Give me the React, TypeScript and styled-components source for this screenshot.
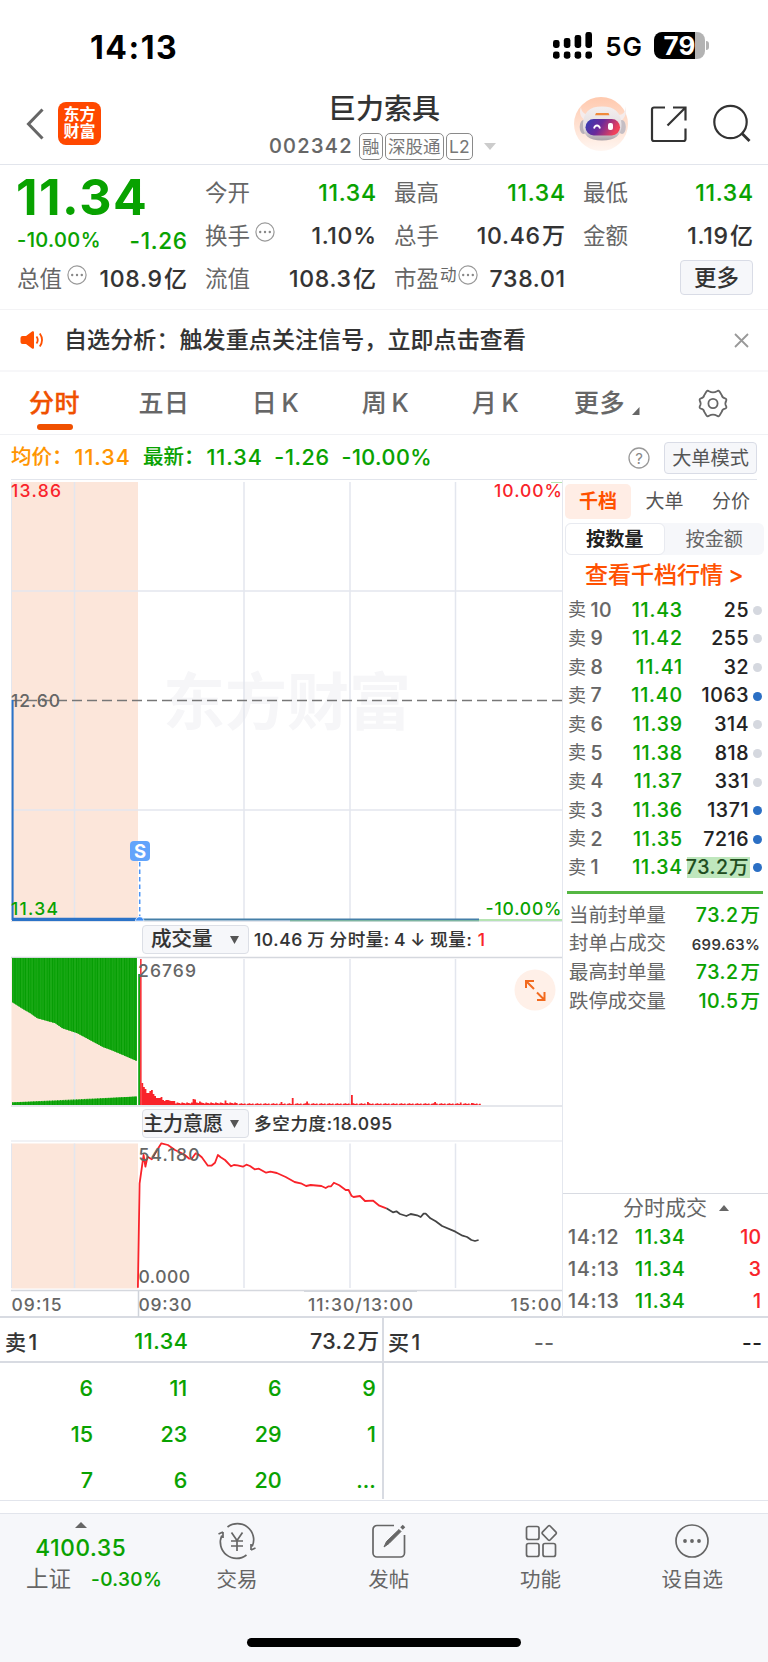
import React from 'react';
import styled, { createGlobalStyle } from 'styled-components';

const GREEN = '#08a200';
const RED = '#f9232a';
const ORANGE = '#ff5000';
const INK = '#333';
const GREY = '#666';
const LINE = '#e2e5ec';

const Global = createGlobalStyle`
  * { box-sizing: border-box; }
  body { margin: 0; background: #fff; font-family: Inter, "Noto Sans CJK SC", sans-serif; color: ${INK}; }
  svg { display: block; flex: none; overflow: visible; }
`;

const Screen = styled.div`
  width: 768px;
  height: 1662px;
  overflow: hidden;
  display: flex;
  flex-direction: column;
  background: #fff;
`;

const Text = styled.span<{ $s: number; $w?: number; $c?: string; $ls?: number; $ws?: number }>`
  font-size: ${p => p.$s}px;
  font-weight: ${p => p.$w ?? 500};
  -webkit-text-stroke: ${p => ((p.$w ?? 500) === 500 ? 0.12 : 0)}px;
  color: ${p => p.$c ?? INK};
  letter-spacing: ${p => p.$ls ?? 0}px;
  word-spacing: ${p => p.$ws ?? -3}px;
  margin-right: ${p => -(p.$ls ?? 0)}px;
  line-height: 1;
  white-space: pre;
`;

/* status bar */
const StatusBar = styled.div`
  height: 92px;
  padding: 32px 59px 0 90px;
  display: flex;
  justify-content: space-between;
  align-items: flex-start;
`;
const StatusRight = styled.div`
  display: flex;
  align-items: center;
  height: 27px;
`;
const Clock = styled.div`
  line-height: 25px;
`;
const NetLabel = styled.div`
  margin: 5px 12px 0 12px;
  line-height: 26px;
`;
const Battery = styled.div`
  width: 51px;
  height: 27px;
  border-radius: 8px;
  background: linear-gradient(90deg, #000 0 40.5px, #b3b3b3 40.5px);
  display: flex;
  align-items: center;
  justify-content: center;
`;
const BatteryNub = styled.div`
  width: 3px;
  height: 9px;
  margin-left: 1px;
  border-radius: 0 4px 4px 0;
  background: #b3b3b3;
`;

/* header */
const Header = styled.header`
  height: 73px;
  border-bottom: 1px solid ${LINE};
  display: grid;
  grid-template-columns: 220px 1fr 220px;
`;
const HeaderLeft = styled.div`
  display: flex;
  align-items: flex-start;
  padding: 10px 0 0 26px;
  gap: 14px;
`;
const BackWrap = styled.div`
  padding-top: 6px;
`;
const Logo = styled.div`
  width: 43px;
  height: 43px;
  border-radius: 8px;
  background: #ff4800;
  color: #fff;
  font-weight: 700;
  font-size: 16px;
  line-height: 17px;
  text-align: center;
  padding-top: 4px;
`;
const HeaderMid = styled.div`
  display: flex;
  flex-direction: column;
  align-items: center;
  padding-top: 2px;
`;
const Title = styled.h1`
  margin: 0;
  height: 33px;
  line-height: 30px;
  font-size: 28px;
  font-weight: 500;
`;
const CodeRow = styled.div`
  display: flex;
  align-items: center;
  height: 40px;
  gap: 2.5px;
  margin-top: -1px;
  padding-right: 3px;
`;
const CodeText = styled.div`
  margin-right: 5px;
  line-height: 20px;
`;
const Tag = styled.div`
  height: 27px;
  padding: 0 2px;
  border: 1px solid #8a8a8a;
  border-radius: 5px;
  font-size: 17.5px;
  line-height: 25px;
  color: #777;
`;
const CaretWrap = styled.div`
  padding-left: 9px;
`;
const HeaderRight = styled.div`
  display: flex;
  align-items: flex-start;
  padding: 5px 0 0 26px;
`;
const ShareWrap = styled.div`
  padding: 8px 0 0 22px;
`;
const SearchWrap = styled.div`
  padding: 7px 0 0 24px;
`;

/* quote block */
const Quote = styled.section`
  height: 145px;
  border-bottom: 1px solid #f3f3f5;
  padding: 7px 15px 0 17px;
  display: grid;
  grid-template-columns: 170px 171px 171px 170px;
  column-gap: 18px;
`;
const QuoteCol = styled.div`
  display: flex;
  flex-direction: column;
`;
const Cell = styled.div<{ $h?: number }>`
  height: ${p => p.$h ?? 43}px;
  display: flex;
  align-items: center;
  justify-content: space-between;
`;
const Label = styled.div`
  display: flex;
  align-items: center;
`;
const Raised = styled.div<{ $gap?: number }>`
  padding-bottom: 9px;
  margin-left: ${p => p.$gap ?? 5}px;
`;
const Lowered = styled.div`
  padding-top: 4px;
`;
const BigPrice = styled.div`
  height: 49px;
  line-height: 41px;
  margin-left: -1px;
`;
const MoreButton = styled.button`
  margin: 2px 0 0 auto;
  width: 73px;
  height: 35px;
  border: 1px solid #d9dce6;
  border-radius: 4px;
  background: #f6f7fa;
  font: 500 22.5px/30px Inter, "Noto Sans CJK SC", sans-serif;
  color: ${INK};
  padding: 0;
`;

/* notice */
const Notice = styled.section`
  height: 62px;
  border-bottom: 2px solid #f7f7f9;
  padding: 0 19px 0 20px;
  display: flex;
  align-items: center;
`;
const NoticeText = styled.div`
  flex: 1;
  margin-left: 19px;
`;

/* period tabs */
const Tabs = styled.nav`
  height: 63px;
  border-bottom: 1px solid #f0f1f4;
  display: grid;
  grid-template-columns: 109px 110px 113px 107px 113px 115px 101px;
`;
const Tab = styled.div<{ $active?: boolean }>`
  display: flex;
  flex-direction: column;
  align-items: center;
  padding-top: 16px;
  font-size: 25px;
  line-height: 31px;
  letter-spacing: 0.6px;
  word-spacing: -3px;
  font-weight: 500;
  -webkit-text-stroke: ${p => (p.$active ? 0.35 : 0.1)}px;
  color: ${p => (p.$active ? '#f05000' : GREY)};
  white-space: pre;
`;
const Underline = styled.div`
  width: 36px;
  height: 6px;
  margin-top: 5px;
  border-radius: 3px;
  background: #f05000;
`;
const MoreTab = styled.div`
  display: flex;
  gap: 7px;
  align-items: flex-end;
  margin-left: -5px;
`;
const GearWrap = styled.div`
  padding: 17px 0 0 31px;
`;

/* info line */
const InfoRow = styled.div`
  height: 44px;
  padding: 1px 11px 0 11px;
  display: flex;
  align-items: center;
`;
const InfoTexts = styled.div`
  flex: 1;
  display: flex;
  align-items: center;
`;
const InfoItem = styled.div<{ $gap: number }>`
  margin-left: ${p => p.$gap}px;
`;
const ModeButton = styled.button`
  margin-left: 14px;
  width: 93px;
  height: 32px;
  border: 1px solid #d9dce6;
  border-radius: 4px;
  background: #f6f7fa;
  font: 400 19.2px/28px Inter, "Noto Sans CJK SC", sans-serif;
  color: #555;
  padding: 0;
`;

/* main area */
const Main = styled.main`
  height: 839px;
  display: grid;
  grid-template-columns: 562px 206px;
  border-bottom: 2px solid #d8dbe2;
`;
const ChartCol = styled.div`
  display: flex;
  flex-direction: column;
`;
const IndicatorRow = styled.div<{ $h: number }>`
  height: ${p => p.$h}px;
  padding-left: 142px;
  display: flex;
  align-items: center;
`;
const Picker = styled.div<{ $pad: number }>`
  width: 107px;
  height: 29px;
  border: 1px solid #dcdfe6;
  border-radius: 4px;
  background: #f6f7fa;
  display: flex;
  align-items: center;
  justify-content: space-between;
  padding: 0 9px 0 ${p => p.$pad}px;
  margin-right: 5px;
`;

/* right side panel */
const Side = styled.aside`
  border-left: 1px solid #e4e7ee;
  display: flex;
  flex-direction: column;
`;
const SideTabs = styled.div`
  height: 45px;
  border-top: 1px solid ${LINE};
  margin-right: 11px;
  padding: 4px 0 0 2px;
  display: grid;
  grid-template-columns: 66px 67px 66px;
`;
const SideTab = styled.div<{ $active?: boolean }>`
  height: 35px;
  border-radius: 5px;
  text-align: center;
  line-height: 35px;
  font-size: 19px;
  font-weight: ${p => (p.$active ? 700 : 400)};
  background: ${p => (p.$active ? '#ffede5' : 'transparent')};
  color: ${p => (p.$active ? ORANGE : '#555')};
`;
const Segment = styled.div`
  height: 32px;
  margin: -1px 4px 0 2px;
  border-radius: 6px;
  background: #f6f7fa;
  display: grid;
  grid-template-columns: 1fr 1fr;
`;
const SegmentItem = styled.div<{ $active?: boolean }>`
  border-radius: 6px;
  text-align: center;
  line-height: 30px;
  font-size: 19.2px;
  border: 1px solid ${p => (p.$active ? '#e8eaf0' : 'transparent')};
  background: ${p => (p.$active ? '#fff' : 'transparent')};
  font-weight: ${p => (p.$active ? 700 : 400)};
  color: ${p => (p.$active ? '#222' : GREY)};
`;
const DepthLink = styled.div`
  height: 41px;
  padding-left: 22px;
  line-height: 45px;
`;
const DepthRow = styled.div`
  height: 28.63px;
  padding: 0 5.5px 0 5px;
  display: grid;
  grid-template-columns: 50px 64px 1fr 13px;
  align-items: center;
  justify-items: end;
`;
const DepthLabel = styled.div`
  justify-self: start;
  display: flex;
  align-items: center;
  gap: 4.5px;
`;
const Volume = styled.div<{ $mark?: boolean }>`
  height: 21px;
  padding-right: 1px;
  width: ${p => (p.$mark ? '63px' : 'auto')};
  display: flex;
  align-items: center;
  justify-content: flex-end;
  background: ${p => (p.$mark ? '#bfe7bd' : 'transparent')};
`;
const Dot = styled.div<{ $on?: boolean }>`
  width: 9px;
  height: 9px;
  border-radius: 50%;
  background: ${p => (p.$on ? '#2b6fc4' : '#d5d8df')};
  margin-right: 1px;
`;
const Divider = styled.div`
  height: 3px;
  margin: 9px 5px 7px 4px;
  background: #55b743;
`;
const SumRow = styled.div`
  height: 28.6px;
  padding: 0 8px 0 6px;
  display: flex;
  align-items: center;
  justify-content: space-between;
`;
const Trades = styled.div`
  margin-top: auto;
  border-top: 1px solid #d8dbe2;
  height: 124px;
`;
const TradesHead = styled.div`
  height: 28px;
  padding: 0 39px 1px 60px;
  display: flex;
  align-items: center;
  justify-content: space-between;
`;
const TradeRow = styled.div`
  height: 32px;
  padding: 0 7px 0 5px;
  display: grid;
  grid-template-columns: 67px 1fr auto;
  align-items: center;
`;

/* order queue */
const Queue = styled.section`
  height: 183px;
  display: grid;
  grid-template-columns: 384px 384px;
  grid-template-rows: 182px;
  border-bottom: 1px solid ${LINE};
`;
const QueueHalf = styled.div<{ $left?: boolean }>`
  height: 181px;
  border-right: ${p => (p.$left ? '2px solid #d8dbe2' : '0')};
`;
const QueueHead = styled.div<{ $left?: boolean }>`
  height: 45px;
  border-bottom: 2px solid #d8dbe2;
  padding: ${p => (p.$left ? '5px 3px 0 5px' : '5px 6px 0 4px')};
  display: grid;
  grid-template-columns: ${p => (p.$left ? '60px 123px 1fr' : '60px 106px 1fr')};
  align-items: center;
  justify-items: end;
  > :first-child { justify-self: start; }
`;
const QueueGrid = styled.div`
  padding: 3px 6px 0 0;
  display: grid;
  grid-template-columns: 93px repeat(3, 94.3px);
  grid-auto-rows: 46px;
  align-items: center;
  justify-items: end;
`;

/* bottom bar */
const BottomBar = styled.footer`
  margin-top: 12px;
  flex: 1;
  border-top: 1px solid ${LINE};
  background: #f6f7fa;
  display: flex;
  flex-direction: column;
  align-items: center;
`;
const NavRow = styled.div`
  width: 768px;
  height: 124px;
  display: grid;
  grid-template-columns: 161px 152px 151.5px 152px 151.5px;
`;
const NavItem = styled.div`
  display: flex;
  flex-direction: column;
  align-items: center;
  padding-top: 9px;
  gap: 11px;
`;
const IndexBox = styled.div`
  display: flex;
  flex-direction: column;
  align-items: center;
  padding-top: 8px;
`;
const IndexValue = styled.div`
  margin: 9px 0 0;
  height: 29px;
  line-height: 22px;
`;
const IndexRow = styled.div`
  padding-left: 26px;
  align-self: flex-start;
  height: 26px;
  display: flex;
  align-items: center;
  gap: 20px;
`;
const HomeBar = styled.div`
  width: 274px;
  height: 9px;
  border-radius: 5px;
  background: #000;
`;

const Dots = () => (
  <svg width="20" height="20" viewBox="0 0 20 20">
    <circle cx="10" cy="10" r="9.1" fill="none" stroke="#999" strokeWidth="1.2" />
    {[5.2, 10, 14.8].map(x => <circle key={x} cx={x} cy="10" r="1.2" fill="#888" />)}
  </svg>
);

const Signal = () => (
  <svg width="40" height="27" viewBox="0 0 40 27">
    {[8, 6, 3, 0].map((y, i) => (
      <g key={i}>
        <rect x={i * 10.8} y={y} width="6.6" height={16 - y} rx="2.4" />
        <rect x={i * 10.8} y="19.5" width="6.6" height="7.2" rx="2.4" />
      </g>
    ))}
  </svg>
);

const Robot = () => (
  <svg width="54" height="54" viewBox="0 0 54 54">
    <defs>
      <linearGradient id="rbg" x1="0" y1="0" x2="0" y2="1">
        <stop offset="0" stopColor="#ffc9ae" />
        <stop offset="1" stopColor="#fff6f1" />
      </linearGradient>
      <linearGradient id="visor" x1="0" y1="0" x2="1" y2="0.3">
        <stop offset="0" stopColor="#2f3db5" />
        <stop offset="0.5" stopColor="#6a2a9a" />
        <stop offset="1" stopColor="#f0425a" />
      </linearGradient>
      <linearGradient id="head" x1="0" y1="0" x2="0" y2="1">
        <stop offset="0" stopColor="#f3efef" />
        <stop offset="0.65" stopColor="#e3dde0" />
        <stop offset="1" stopColor="#a9a1a8" />
      </linearGradient>
    </defs>
    <circle cx="27" cy="27" r="27" fill="url(#rbg)" />
    <path d="M7 10c0 4 3 7 7 8l-3 5c-5-3-6-8-4-13zM51 9c1 6-2 9-7 9l3 6c5-4 6-9 4-15z" fill="#f5ecec" />
    <ellipse cx="9.5" cy="30" rx="3.8" ry="7" fill="#b8b1b9" />
    <ellipse cx="48" cy="30" rx="3.8" ry="7" fill="#c5bec4" />
    <path d="M28 9.500c13 0 19 6 19.500 17.500c.3 11-6 16.500-19.500 16.500S8.500 38 9 27C9.500 15.500 15 9.500 28 9.500z" fill="url(#head)" />
    <path d="M22 16h12.500l1 2.200H21z" fill="#f08a3c" />
    <rect x="11.5" y="22" width="34.5" height="16.500" rx="8.2" fill="url(#visor)" />
    <path d="M20 31.500c1-4 5-4 6 0" fill="none" stroke="#fff" strokeWidth="1.800" />
    <rect x="34" y="26" width="5" height="7" rx="2" fill="#fff" />
  </svg>
);

const gridX = [74.5, 244, 350, 455.5];

const preTop: [number, number][] = [[12, 45], [23, 52], [30, 56], [37, 61], [55, 66], [62, 71], [77, 76], [103, 90], [110, 92.5], [122, 97.5], [137, 104]];
const topAt = (x: number) => {
  for (let i = 1; i < preTop.length; i++) {
    const [x0, y0] = preTop[i - 1];
    const [x1, y1] = preTop[i];
    if (x <= x1) return y0 + ((x - x0) / (x1 - x0)) * (y1 - y0);
  }
  return 104;
};
const preBars = Array.from({ length: 78 }, (_, i) => 12 + i * 1.6);

const openingVolume = [22, 18, 16, 12, 12, 14, 15, 11, 9, 7, 7, 7, 8, 5, 4, 5, 5, 4.5, 4, 4, 4];
const spikes: Record<number, number> = { 32: 6, 33: 5.5, 36: 3.4, 52: 4.5, 87: 3, 94: 7, 103: 3.5, 131: 10, 141: 3, 183: 3, 199: 2.6, 206: 2 };
const volume = Array.from({ length: 212 }, (_, i) => {
  const base = i < openingVolume.length ? openingVolume[i] : i < 60 ? 1.6 + ((i * 5) % 3) * 0.5 : 0.6 + ((i * 7) % 5) * 0.3;
  return [141.4 + i * 1.6, spikes[i] ?? base];
});
const volumePath = volume.map(([x, h]) => `M${x.toFixed(1)} ${148 - h}h1.800v${h}h-1.800z`).join('');

const toPoints = (s: string) =>
  s.split(' ').map(p => {
    const [x, y] = p.split(',').map(Number);
    return `${(x / 2.8).toFixed(1)},${(y / 3 - 40).toFixed(1)}`;
  }).join(' ');
const redLine = toPoints('386,563 391,250 402,165 407,200 413,170 425,178 440,150 452,130 470,135 490,150 500,155 515,163 530,176 538,175 548,160 555,163 565,172 582,197 592,197 602,188 610,165 618,172 630,180 647,199 655,195 665,196 680,200 690,194 700,198 713,208 725,206 745,218 757,215 775,219 800,231 825,246 845,251 857,258 870,255 900,258 912,264 920,259 927,259 935,248 950,256 968,270 976,270 984,287 990,291 1008,288 1022,303 1045,302 1062,317 1082,325');
const blackLine = toPoints('1082,325 1100,337 1110,334 1120,342 1138,348 1150,342 1168,346 1178,351 1186,341 1192,341 1205,355 1220,364 1238,378 1275,395 1295,407 1308,411 1320,420 1330,423 1340,420');

const ChartText = styled.text<{ $c: string }>`
  font-family: Inter, "Noto Sans CJK SC", sans-serif;
  font-size: 17.5px;
  font-weight: 500;
  fill: ${p => p.$c};
`;
const Watermark = styled.text`
  font-family: "Noto Sans CJK SC", sans-serif;
  font-size: 62px;
  font-weight: 700;
  fill: #f6f6f8;
`;

const PriceChart = () => (
  <svg width="562" height="443" viewBox="0 0 562 443">
    <path d="M11 .5H562" stroke={LINE} />
    <rect x="11.5" y="3" width="126.5" height="439" fill="#fce6da" />
    <Watermark x="163" y="246">东方财富</Watermark>
    <g stroke="#e3e6ee" strokeWidth="1.5">
      {gridX.map(x => <path key={x} d={`M${x} 3V441`} />)}
      <path d="M11 112H562M11 331H562" />
      <path d="M11.5 3V441" strokeWidth="1" />
    </g>
    <path d="M12 221.5H562" stroke="#777" strokeWidth="1.6" strokeDasharray="10 5" />
    <path d="M551 3.5H562" stroke="#b5e3b0" />
    <path d="M479 441H562" stroke="#9edb9a" strokeWidth="1.5" />
    <path d="M11 442.5H562" stroke={LINE} />
    <path d="M12.6 221V441" stroke="#2b73c8" strokeWidth="2" />
    <path d="M138 440.5H479" stroke="#447fa8" strokeWidth="2" />
    <path d="M290 441.8H479" stroke="#5fae7c" strokeWidth=".8" />
    <path d="M12 440.4H140" stroke="#2b73c8" strokeWidth="3.4" />
    <path d="M139.7 383V437" stroke="#4b95f7" strokeWidth="1.5" strokeDasharray="4.5 3" />
    <path d="M135.5 442a4.200 4.200 0 0 1 8.400 0z" fill="#3c8cf5" stroke="#fff" strokeWidth=".7" />
    <rect x="130" y="362" width="20" height="20" rx="4" fill="#62a4fb" />
    <text x="140" y="378.6" textAnchor="middle" fontFamily="Inter" fontSize="18.500" fontWeight="700" fill="#fff">S</text>
    <ChartText $c={RED} x="11" y="18" textLength="50">13.86</ChartText>
    <ChartText $c={RED} x="494" y="18" textLength="68">10.00%</ChartText>
    <ChartText $c={GREY} x="11" y="227.500" textLength="49">12.60</ChartText>
    <ChartText $c={GREEN} x="11" y="436" textLength="47">11.34</ChartText>
    <ChartText $c={GREEN} x="485.500" y="436" textLength="76">-10.00%</ChartText>
  </svg>
);

const VolumeChart = () => (
  <svg width="562" height="150" viewBox="0 0 562 150">
    <rect x="11.5" y="1" width="126.5" height="147" fill="#fce6da" />
    <g stroke="#e3e6ee" strokeWidth="1.5">
      {gridX.map(x => <path key={x} d={`M${x} 2V148`} />)}
    </g>
    <path d="M11 .5H562" stroke="#d5d8de" strokeWidth="1.4" />
    <path d={`M12 1L${preTop.map(p => p.join(' ')).join('L')}V1z`} fill="#2bb127" />
    <path d="M12 145.5L70 143.5L137 139.5V148H12z" fill="#2bb127" />
    {preBars.map((x, i) => (
      <g key={x} fill={i % 3 ? '#069e04' : '#0fa50c'}>
        <rect x={x} y="1" width="1.2" height={topAt(x) - 0.6} />
        <rect x={x} y={145.3 - i * 0.075} width="1.2" height={2.7 + i * 0.075} />
      </g>
    ))}
    <path d="M137 1h1.200v147H137z" fill="#fff" />
    <path d="M138.200 17h2v131h-2z" fill="#12a50f" />
    <path d="M140.100 2h1.500v146h-1.500z" fill="#f9232a" />
    <path d={volumePath} fill="#f9232a" />
    <path d="M11 149H562" stroke="#dcdfe6" strokeWidth="1.5" />
    <ChartText $c={GREY} x="138" y="20" textLength="58">26769</ChartText>
    <circle cx="535" cy="33" r="20.5" fill="#fff0e8" />
    <path d="M526 31V24h8M526.500 24.500l7.500 7.500M537 43h7.500v-8M544 42.500l-7-7" fill="none" stroke="#f26a1e" strokeWidth="2" />
  </svg>
);

const IntentChart = () => (
  <svg width="562" height="151" viewBox="0 0 562 151">
    <path d="M11 1H562" stroke="#eceef2" strokeWidth="1.5" />
    <rect x="11.5" y="3.5" width="126.5" height="145" fill="#fce6da" />
    <g stroke="#e3e6ee" strokeWidth="1.5">
      {gridX.map(x => <path key={x} d={`M${x} 3.500V148`} />)}
      <path d="M11.5 3.500V148" strokeWidth="1" />
    </g>
    <path d="M11 150.500H562" stroke="#d5d8de" strokeWidth="1.5" />
    <g fill="none" strokeWidth="1.8" strokeLinejoin="round">
      <polyline points={redLine} stroke="#f9232a" />
      <polyline points={blackLine} stroke="#444" />
    </g>
    <ChartText $c={GREY} x="138.500" y="21" textLength="61">54.180</ChartText>
    <ChartText $c={GREY} x="138.500" y="143" textLength="51.500">0.000</ChartText>
  </svg>
);

const TimeAxis = () => (
  <svg width="562" height="26" viewBox="0 0 562 26">
    <path d="M138.500 0V26" stroke="#cfd3da" strokeWidth="1.500" />
    <path d="M304 .5H417" stroke="#d5d8de" />
    <ChartText $c={GREY} x="11.500" y="19.500" textLength="50">09:15</ChartText>
    <ChartText $c={GREY} x="138.500" y="19.500" textLength="53">09:30</ChartText>
    <ChartText $c={GREY} x="308" y="19.500" textLength="105">11:30/13:00</ChartText>
    <ChartText $c={GREY} x="510.500" y="19.500" textLength="51">15:00</ChartText>
  </svg>
);

const DownCaret = () => (
  <svg width="9" height="8" viewBox="0 0 9 8"><path d="M0 0h9L4.500 8z" fill="#555" /></svg>
);

const depth: [string, string, string, boolean][] = [
  ['10', '11.43', '25', false],
  ['9', '11.42', '255', false],
  ['8', '11.41', '32', false],
  ['7', '11.40', '1063', true],
  ['6', '11.39', '314', false],
  ['5', '11.38', '818', false],
  ['4', '11.37', '331', false],
  ['3', '11.36', '1371', true],
  ['2', '11.35', '7216', true],
  ['1', '11.34', '73.2 万', true],
];

const Key = ({ children }: { children: React.ReactNode }) => <Text $s={22.5} $w={400} $c={GREY}>{children}</Text>;
const Val = ({ children, c = INK }: { children: React.ReactNode; c?: string }) => (
  <Text $s={23} $c={c} $ls={0.7} $ws={-5.5}>{children}</Text>
);
const SumKey = ({ children }: { children: React.ReactNode }) => <Text $s={19.4} $w={400} $c={GREY}>{children}</Text>;
const SumVal = ({ children }: { children: React.ReactNode }) => <Text $s={19.5} $c={GREEN} $ls={0.6} $ws={-4}>{children}</Text>;

export default function App() {
  return (
    <Screen>
      <Global />
      <StatusBar>
        <Clock><Text $s={32} $w={700} $c="#000" $ls={1.5}>14:13</Text></Clock>
        <StatusRight>
          <Signal />
          <NetLabel><Text $s={26} $w={600} $c="#000" $ls={0.8}>5G</Text></NetLabel>
          <Battery><Text $s={26} $w={700} $c="#fff">79</Text></Battery>
          <BatteryNub />
        </StatusRight>
      </StatusBar>

      <Header>
        <HeaderLeft>
          <BackWrap>
            <svg width="18" height="32" viewBox="0 0 18 32"><path d="M16.500 1.500L2.500 16L16.500 30.500" fill="none" stroke="#666" strokeWidth="3" /></svg>
          </BackWrap>
          <Logo>东方<br />财富</Logo>
        </HeaderLeft>
        <HeaderMid>
          <Title>巨力索具</Title>
          <CodeRow>
            <CodeText><Text $s={20} $c={GREY} $ls={1.3}>002342</Text></CodeText>
            <Tag>融</Tag>
            <Tag>深股通</Tag>
            <Tag>L2</Tag>
            <CaretWrap><svg width="12" height="7" viewBox="0 0 12 7"><path d="M0 0h12L6 7z" fill="#ccc" /></svg></CaretWrap>
          </CodeRow>
        </HeaderMid>
        <HeaderRight>
          <Robot />
          <ShareWrap>
            <svg width="38" height="38" viewBox="0 0 38 38" fill="none" stroke="#333" strokeWidth="2.200">
              <path d="M15 2.500H4a2 2 0 0 0-2 2V34a2 2 0 0 0 2 2H33.500a2 2 0 0 0 2-2V23.500M23 2.500H35.500V15.500M35 3L17.500 20.500" />
            </svg>
          </ShareWrap>
          <SearchWrap>
            <svg width="40" height="40" viewBox="0 0 40 40" fill="none" stroke="#333" strokeWidth="2.200">
              <circle cx="18.500" cy="18" r="16.200" />
              <path d="M29.500 29L37.500 37" strokeWidth="2.800" />
            </svg>
          </SearchWrap>
        </HeaderRight>
      </Header>

      <Quote>
        <QuoteCol>
          <BigPrice><Text $s={50} $w={700} $c={GREEN} $ls={1.5}>11.34</Text></BigPrice>
          <Cell $h={37}>
            <Text $s={20} $c={GREEN} $ls={0.4}>-10.00%</Text>
            <Lowered><Text $s={22.5} $c={GREEN} $ls={0.7}>-1.26</Text></Lowered>
          </Cell>
          <Cell>
            <Label><Key>总值</Key><Raised><Dots /></Raised></Label>
            <Val>108.9 亿</Val>
          </Cell>
        </QuoteCol>
        <QuoteCol>
          <Cell><Key>今开</Key><Val c={GREEN}>11.34</Val></Cell>
          <Cell><Label><Key>换手</Key><Raised><Dots /></Raised></Label><Val>1.10%</Val></Cell>
          <Cell><Key>流值</Key><Val>108.3 亿</Val></Cell>
        </QuoteCol>
        <QuoteCol>
          <Cell><Key>最高</Key><Val c={GREEN}>11.34</Val></Cell>
          <Cell><Key>总手</Key><Val>10.46 万</Val></Cell>
          <Cell>
            <Label>
              <Key>市盈</Key>
              <Raised $gap={1}><Text $s={16.5} $w={400} $c={GREY}>动</Text></Raised>
              <Raised $gap={1}><Dots /></Raised>
            </Label>
            <Val>738.01</Val>
          </Cell>
        </QuoteCol>
        <QuoteCol>
          <Cell><Key>最低</Key><Val c={GREEN}>11.34</Val></Cell>
          <Cell><Key>金额</Key><Val>1.19 亿</Val></Cell>
          <MoreButton>更多</MoreButton>
        </QuoteCol>
      </Quote>

      <Notice>
        <svg width="25" height="20" viewBox="0 0 25 20">
          <path d="M2 6h4l6-4.500c1-.7 2-.2 2 1v15c0 1.200-1 1.700-2 1L6 14H2.500Q.5 14 .5 12V8Q.5 6 2.500 6z" fill="#ff5000" />
          <path d="M16.500 6.500q2.500 3.500 0 7M19.800 3.500q4.500 6.500 0 13" fill="none" stroke="#ff5000" strokeWidth="1.800" />
        </svg>
        <NoticeText><Text $s={23} $ls={0.1}>自选分析：触发重点关注信号，立即点击查看</Text></NoticeText>
        <svg width="15" height="15" viewBox="0 0 15 15"><path d="M1 1L14 14M14 1L1 14" stroke="#999" strokeWidth="1.800" /></svg>
      </Notice>

      <Tabs>
        <Tab $active>分时<Underline /></Tab>
        <Tab>五日</Tab>
        <Tab>日 K</Tab>
        <Tab>周 K</Tab>
        <Tab>月 K</Tab>
        <Tab>
          <MoreTab>更多<svg width="8" height="12" viewBox="0 0 8 12"><path d="M7.500 0V8H0z" fill="#666" /></svg></MoreTab>
        </Tab>
        <GearWrap>
          <svg width="30" height="29" viewBox="0 0 30 29" fill="none" stroke="#666" strokeWidth="1.800">
            <path d="M8.300 2.800Q9.500 1 11 2.200Q15 4.600 19 2.200Q20.500 1 21.700 2.800L23.800 6.300Q24.300 8.800 27 9.300Q28.800 9.800 28.300 11.500Q26.400 14.500 28.300 17.500Q28.800 19.200 27 19.700Q24.300 20.200 23.800 22.700L21.700 26.200Q20.500 28 19 26.800Q15 24.400 11 26.800Q9.500 28 8.300 26.200L6.200 22.700Q5.700 20.200 3 19.700Q1.200 19.200 1.700 17.500Q3.600 14.500 1.700 11.500Q1.200 9.800 3 9.300Q5.700 8.800 6.200 6.300z" />
            <circle cx="15" cy="14.500" r="4.600" />
          </svg>
        </GearWrap>
      </Tabs>

      <InfoRow>
        <InfoTexts>
          <InfoItem $gap={0}><Text $s={20.5} $c="#ff9500">均价：</Text></InfoItem>
          <InfoItem $gap={2}><Text $s={21.5} $c="#ff9500" $ls={1}>11.34</Text></InfoItem>
          <InfoItem $gap={13}><Text $s={20.5} $c={GREEN}>最新：</Text></InfoItem>
          <InfoItem $gap={2}><Text $s={21.5} $c={GREEN} $ls={1}>11.34</Text></InfoItem>
          <InfoItem $gap={12.5}><Text $s={21.5} $c={GREEN} $ls={0.6}>-1.26</Text></InfoItem>
          <InfoItem $gap={12.5}><Text $s={21.5} $c={GREEN} $ls={0.5}>-10.00%</Text></InfoItem>
        </InfoTexts>
        <svg width="22" height="22" viewBox="0 0 22 22">
          <circle cx="11" cy="11" r="10" fill="none" stroke="#999" strokeWidth="1.300" />
          <text x="11" y="16.500" textAnchor="middle" fontFamily="Inter" fontSize="15" fill="#888">?</text>
        </svg>
        <ModeButton>大单模式</ModeButton>
      </InfoRow>

      <Main>
        <ChartCol>
          <PriceChart />
          <IndicatorRow $h={35}>
            <Picker $pad={8}><Text $s={20.5}>成交量</Text><DownCaret /></Picker>
            <Text $s={17.5} $ls={0.6} $ws={-1}>10.46 万 分时量: 4 ↓ 现量: </Text><Text $s={17.5} $c={RED}> 1</Text>
          </IndicatorRow>
          <VolumeChart />
          <IndicatorRow $h={33}>
            <Picker $pad={0}><Text $s={20}>主力意愿</Text><DownCaret /></Picker>
            <Text $s={17.5} $ls={0.7}>多空力度:18.095</Text>
          </IndicatorRow>
          <IntentChart />
          <TimeAxis />
        </ChartCol>
        <Side>
          <SideTabs>
            <SideTab $active>千档</SideTab>
            <SideTab>大单</SideTab>
            <SideTab>分价</SideTab>
          </SideTabs>
          <Segment>
            <SegmentItem $active>按数量</SegmentItem>
            <SegmentItem>按金额</SegmentItem>
          </Segment>
          <DepthLink><Text $s={23} $c={ORANGE} $ws={-1}>查看千档行情 &gt;</Text></DepthLink>
          {depth.map(([n, price, vol, on]) => (
            <DepthRow key={n}>
              <DepthLabel><Text $s={18} $w={400} $c={GREY}>卖</Text><Text $s={19.5} $c={GREY} $ls={0.4}>{n}</Text></DepthLabel>
              <Text $s={19.5} $c={GREEN} $ls={0.8}>{price}</Text>
              <Volume $mark={n === '1'}><Text $s={19.5} $c={n === '1' ? '#1f4d1f' : '#222'} $ls={0.6} $ws={-5.5}>{vol}</Text></Volume>
              <Dot $on={on} />
            </DepthRow>
          ))}
          <Divider />
          <SumRow><SumKey>当前封单量</SumKey><SumVal>73.2 万</SumVal></SumRow>
          <SumRow><SumKey>封单占成交</SumKey><Text $s={15} $ls={0.4}>699.63%</Text></SumRow>
          <SumRow><SumKey>最高封单量</SumKey><SumVal>73.2 万</SumVal></SumRow>
          <SumRow><SumKey>跌停成交量</SumKey><SumVal>10.5 万</SumVal></SumRow>
          <Trades>
            <TradesHead>
              <Text $s={21} $w={400} $c={GREY}>分时成交</Text>
              <svg width="10" height="6" viewBox="0 0 10 6"><path d="M0 6h10L5 0z" fill="#666" /></svg>
            </TradesHead>
            {[['14:12', '10'], ['14:13', '3'], ['14:13', '1']].map(([t, v], i) => (
              <TradeRow key={i}>
                <Text $s={19.5} $c={GREY} $ls={0.9}>{t}</Text>
                <Text $s={19.5} $c={GREEN} $ls={0.8}>11.34</Text>
                <Text $s={19.5} $c={RED}>{v}</Text>
              </TradeRow>
            ))}
          </Trades>
        </Side>
      </Main>

      <Queue>
        <QueueHalf $left>
          <QueueHead $left>
            <Text $s={21}>卖 1</Text>
            <Text $s={21.5} $c={GREEN} $ls={0.6}>11.34</Text>
            <Text $s={21.5} $ls={0.3} $ws={-4.5}>73.2 万</Text>
          </QueueHead>
          <QueueGrid>
            {['6', '11', '6', '9', '15', '23', '29', '1', '7', '6', '20', '...'].map((v, i) => (
              <Text key={i} $s={21.5} $c={GREEN}>{v}</Text>
            ))}
          </QueueGrid>
        </QueueHalf>
        <QueueHalf>
          <QueueHead>
            <Text $s={21}>买 1</Text>
            <Text $s={21} $c={GREY} $ls={0.6}>--</Text>
            <Text $s={21} $c="#222" $ls={0.6}>--</Text>
          </QueueHead>
        </QueueHalf>
      </Queue>

      <BottomBar>
        <NavRow>
          <IndexBox>
            <svg width="12" height="6" viewBox="0 0 12 6"><path d="M0 6h12L6 0z" fill="#666" /></svg>
            <IndexValue><Text $s={22.5} $c={GREEN} $ls={0.7}>4100.35</Text></IndexValue>
            <IndexRow>
              <Text $s={22.5} $w={400} $c={GREY}>上证</Text>
              <Text $s={19} $c={GREEN} $ls={0.4}>-0.30%</Text>
            </IndexRow>
          </IndexBox>
          <NavItem>
            <svg width="40" height="36" viewBox="0 0 40 36" fill="none" stroke="#666" strokeWidth="1.700">
              <path d="M10.500 4A16.200 16.200 0 0 1 35.200 23.500M34 27l4.500-2M34 27V21" />
              <path d="M29.500 32A16.200 16.200 0 0 1 4.800 12.500M6 9l-4.500 2M6 9V15" />
              <path d="M14.500 9.500L20 17.500L25.500 9.500M20 17.500V28M14 18H26M14 23H26" />
            </svg>
            <Text $s={20.5} $w={400} $c={GREY}>交易</Text>
          </NavItem>
          <NavItem>
            <svg width="36" height="36" viewBox="0 0 36 36" fill="none" stroke="#666" strokeWidth="1.700">
              <path d="M23 2.500H6a4 4 0 0 0-4 4V30a4 4 0 0 0 4 4H29.500a4 4 0 0 0 4-4V12" />
              <path d="M13 24L15.500 18.500L28 6.500L30 8.500L18 20.500z" fill="#666" strokeWidth="1" />
              <path d="M30.500 5.500L33 3" strokeWidth="3.500" />
            </svg>
            <Text $s={20.5} $w={400} $c={GREY}>发帖</Text>
          </NavItem>
          <NavItem>
            <svg width="36" height="36" viewBox="0 0 36 36" fill="none" stroke="#666" strokeWidth="1.700">
              <rect x="3.500" y="3.500" width="12.500" height="13" rx="2" />
              <rect x="3.500" y="20.500" width="12.500" height="13" rx="2" />
              <rect x="20" y="20.500" width="12.500" height="13" rx="2" />
              <path d="M25.300 3q.9-.9 1.800 0l5.900 6.100q.8.900 0 1.800l-5.900 6.100q-.9.900-1.800 0l-5.900-6.100q-.8-.9 0-1.800z" />
            </svg>
            <Text $s={20.5} $w={400} $c={GREY}>功能</Text>
          </NavItem>
          <NavItem>
            <svg width="36" height="36" viewBox="0 0 36 36">
              <circle cx="18" cy="18" r="16" fill="none" stroke="#666" strokeWidth="1.700" />
              {[11, 18, 25].map(x => <circle key={x} cx={x} cy="18" r="1.900" fill="#666" />)}
            </svg>
            <Text $s={20.5} $w={400} $c={GREY}>设自选</Text>
          </NavItem>
        </NavRow>
        <HomeBar />
      </BottomBar>
    </Screen>
  );
}
